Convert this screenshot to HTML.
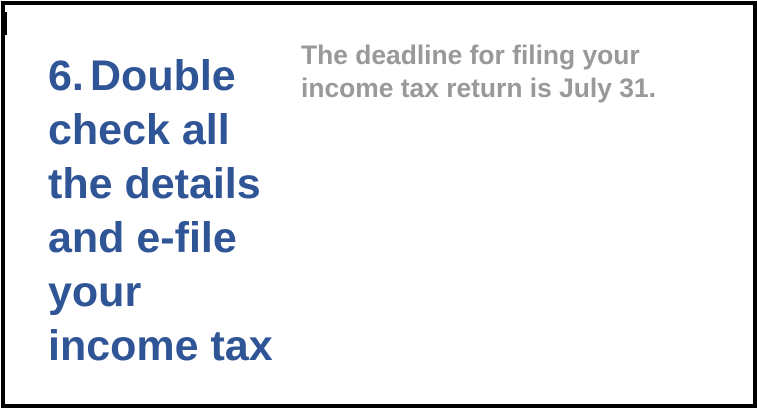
<!DOCTYPE html>
<html><head><meta charset="utf-8"><style>
html,body{margin:0;padding:0;background:#fff;}
body{width:757px;height:409px;position:relative;overflow:hidden;}
.box{position:absolute;left:1px;top:1px;width:748px;height:399px;border:4px solid #000;}
.nub{position:absolute;left:4px;top:12px;width:3px;height:23px;background:#000;}
.blue{position:absolute;left:48px;top:49px;font:bold 43px/54px "Liberation Sans",Arial,sans-serif;color:#2F5597;white-space:nowrap;}
.gray{position:absolute;left:301px;top:39px;font:bold 26.4px/33px "Liberation Sans",Arial,sans-serif;color:#999;white-space:nowrap;}
</style></head><body>
<div class="box"></div><div class="nub"></div>
<div class="blue"><span>6.</span><span style="position:absolute;left:42px;">Double</span><br>check all<br>the details<br>and e-file<br>your<br>income tax</div>
<div class="gray">The deadline for filing your<br>income tax return is July 31.</div>
</body></html>
